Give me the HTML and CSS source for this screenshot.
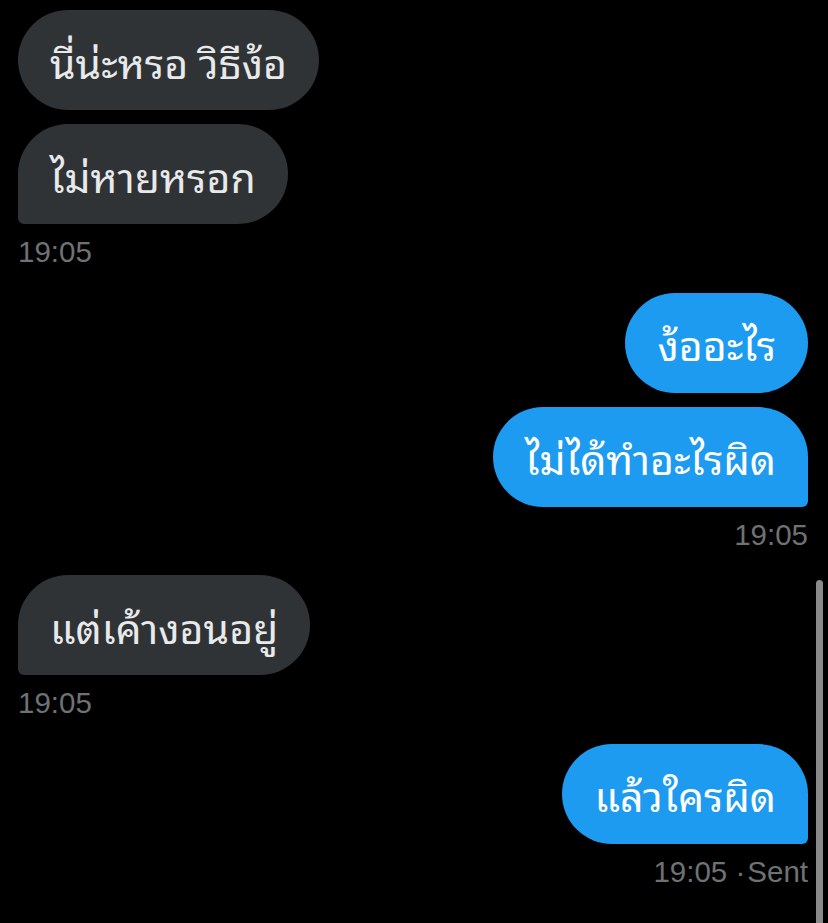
FILE: index.html
```html
<!DOCTYPE html>
<html lang="th">
<head>
    <meta charset="UTF-8">
    <meta name="viewport" content="width=device-width, initial-scale=1.0">
    <title>Messages</title>
    <link rel="stylesheet" href="styles.css">
</head>
<body>
    <div class="chat">
        <div class="group received">
            <div class="bubble first">นี่น่ะหรอ วิธีง้อ</div>
            <div class="bubble last">ไม่หายหรอก</div>
            <div class="time">19:05</div>
        </div>

        <div class="group sent">
            <div class="bubble first">ง้ออะไร</div>
            <div class="bubble last">ไม่ได้ทำอะไรผิด</div>
            <div class="time">19:05</div>
        </div>

        <div class="group received">
            <div class="bubble last">แต่เค้างอนอยู่</div>
            <div class="time">19:05</div>
        </div>

        <div class="group sent">
            <div class="bubble last">แล้วใครผิด</div>
            <div class="time">19:05 <span class="dot">·</span>Sent</div>
        </div>
    </div>
    <div class="scrollbar"></div>
</body>
</html>
```

FILE: styles.css
```css
html, body {
    margin: 0;
    height: 100%;
    background: #000000;
    overflow: hidden;
}

body {
    font-family: "Noto Sans Thai Looped", "Loma", "Garuda", "Noto Sans Thai", "Noto Sans", "DejaVu Sans", sans-serif;
    position: relative;
}

.chat {
    display: flex;
    flex-direction: column;
    gap: 23.6px;
    padding: 10px 20px 0 18px;
}

.group {
    display: flex;
    flex-direction: column;
    gap: 14px;
}

.received {
    align-items: flex-start;
}

.sent {
    align-items: flex-end;
}

.bubble {
    height: 100px;
    box-sizing: border-box;
    display: flex;
    align-items: center;
    padding: 0 32px;
    font-size: 41px;
    border-radius: 50px;
    white-space: nowrap;
}

.received .bubble {
    background: #303336;
    color: #e7e9ea;
}

.sent .bubble {
    background: #1d9bf0;
    color: #ffffff;
}

.received .bubble.last {
    border-bottom-left-radius: 6px;
}

.sent .bubble.last {
    border-bottom-right-radius: 6px;
}

.time {
    font-family: "Liberation Sans", Arial, sans-serif;
    font-size: 29.5px;
    line-height: 34px;
    color: #6e7275;
    margin-top: -3px;
}

.dot {
    margin-right: 2px;
}

.scrollbar {
    position: absolute;
    top: 580px;
    bottom: 0;
    right: 5px;
    width: 7px;
    border-radius: 4px 4px 0 0;
    background: #8a8a8a;
}
```
